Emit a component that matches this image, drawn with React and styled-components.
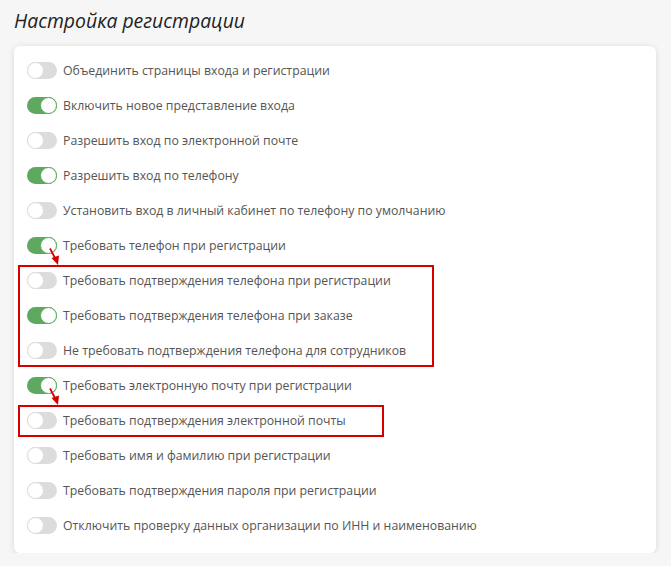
import React from "react";
import styled, { createGlobalStyle } from "styled-components";

const GlobalStyle = createGlobalStyle`
  html, body {
    margin: 0;
    padding: 0;
    background: #f6f6f6;
  }
  body {
    font-family: "Open Sans", "Noto Sans", sans-serif;
  }
`;

const Page = styled.div`
  padding: 9px 15px 0 14px;
  width: 671px;
  box-sizing: border-box;
`;

const Title = styled.h2`
  margin: 0 0 13px;
  font-size: 19.4px;
  line-height: 24px;
  font-style: italic;
  font-weight: normal;
  color: #222;
`;

const Card = styled.div`
  background: #fff;
  border-radius: 6px;
  box-shadow: 0 1px 6px rgba(0, 0, 0, 0.12);
  padding: 7px 13px 10px;
`;

const Row = styled.label`
  position: relative;
  display: flex;
  align-items: center;
  gap: 6px;
  height: 35px;
  font-size: 12.3px;
  color: #555;
  cursor: pointer;
`;

const Track = styled.span`
  position: relative;
  flex: none;
  width: 30px;
  height: 17px;
  border-radius: 9px;
  background: ${p => (p.on ? "#5fa85f" : "#dcdcdc")};

  &::after {
    content: "";
    position: absolute;
    top: 0;
    left: ${p => (p.on ? "13px" : "0")};
    width: 15px;
    height: 15px;
    border-radius: 50%;
    background: #fff;
    border: 1px solid ${p => (p.on ? "#5fa85f" : "#dcdcdc")};
  }
`;

const Group = styled.div`
  position: relative;

  &::after {
    content: "";
    position: absolute;
    top: 2px;
    bottom: 1px;
    left: -9px;
    width: ${p => p.boxWidth}px;
    border: 2px solid #d40000;
    box-sizing: border-box;
    pointer-events: none;
  }
`;

const Arrow = styled.svg`
  position: absolute;
  left: 22px;
  top: 20px;
  overflow: visible;
  pointer-events: none;
`;

const RedArrow = () => (
  <Arrow width="12" height="18" viewBox="0 0 12 18">
    <line x1="1" y1="0.5" x2="6" y2="10" stroke="#d40000" strokeWidth="1.8" />
    <polygon points="2.5,10 10,7.5 9,17" fill="#d40000" />
  </Arrow>
);

const Toggle = ({ on, label, arrow }) => (
  <Row>
    <Track on={on ? 1 : 0} />
    <span>{label}</span>
    {arrow && <RedArrow />}
  </Row>
);

export default function App() {
  return (
    <Page>
      <GlobalStyle />
      <Title>Настройка регистрации</Title>
      <Card>
        <Toggle label="Объединить страницы входа и регистрации" />
        <Toggle on label="Включить новое представление входа" />
        <Toggle label="Разрешить вход по электронной почте" />
        <Toggle on label="Разрешить вход по телефону" />
        <Toggle label="Установить вход в личный кабинет по телефону по умолчанию" />
        <Toggle on arrow label="Требовать телефон при регистрации" />
        <Group boxWidth={416}>
          <Toggle label="Требовать подтверждения телефона при регистрации" />
          <Toggle on label="Требовать подтверждения телефона при заказе" />
          <Toggle label="Не требовать подтверждения телефона для сотрудников" />
        </Group>
        <Toggle on arrow label="Требовать электронную почту при регистрации" />
        <Group boxWidth={366}>
          <Toggle label="Требовать подтверждения электронной почты" />
        </Group>
        <Toggle label="Требовать имя и фамилию при регистрации" />
        <Toggle label="Требовать подтверждения пароля при регистрации" />
        <Toggle label="Отключить проверку данных организации по ИНН и наименованию" />
      </Card>
    </Page>
  );
}
